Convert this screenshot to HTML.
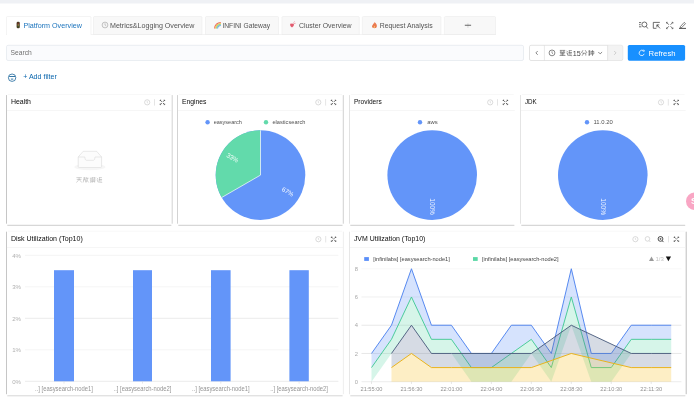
<!DOCTYPE html>
<html><head><meta charset="utf-8"><title>Dashboard</title>
<style>
html,body{margin:0;padding:0;background:#fff;overflow:hidden}
body{width:694px;height:400px;font-family:"Liberation Sans",sans-serif}
svg{display:block;position:absolute;left:0;top:0;will-change:transform;filter:blur(0.3px)}
svg text{font-family:"Liberation Sans",sans-serif}
</style></head><body>
<svg width="694" height="400" viewBox="0 0 694 400">
<rect x="0" y="0" width="694" height="400" fill="#fff"/>
<rect x="0" y="0" width="694" height="3.5" fill="#eff1f5"/>
<path d="M6.5,34.5 V17.5 Q6.5,16.5 7.5,16.5 H90 Q91,16.5 91,17.5 V34.5 Z" fill="#fff" stroke="#ececec" stroke-width="0.6"/>
<text x="23.4" y="27.7" font-size="7.1" fill="#1c74bd" text-anchor="start"  textLength="58.5" lengthAdjust="spacingAndGlyphs">Platform Overview</text>
<path d="M93.5,34.5 V17.5 Q93.5,16.5 94.5,16.5 H201 Q202,16.5 202,17.5 V34.5 Z" fill="#f8f8f8" stroke="#ececec" stroke-width="0.6"/>
<text x="110" y="27.7" font-size="7.1" fill="#545454" text-anchor="start"  textLength="84.4" lengthAdjust="spacingAndGlyphs">Metrics&amp;Logging Overview</text>
<path d="M205.5,34.5 V17.5 Q205.5,16.5 206.5,16.5 H277.5 Q278.5,16.5 278.5,17.5 V34.5 Z" fill="#f8f8f8" stroke="#ececec" stroke-width="0.6"/>
<text x="222.4" y="27.7" font-size="7.1" fill="#545454" text-anchor="start"  textLength="47.6" lengthAdjust="spacingAndGlyphs">INFINI Gateway</text>
<path d="M282,34.5 V17.5 Q282,16.5 283,16.5 H358.3 Q359.3,16.5 359.3,17.5 V34.5 Z" fill="#f8f8f8" stroke="#ececec" stroke-width="0.6"/>
<text x="298.9" y="27.7" font-size="7.1" fill="#545454" text-anchor="start"  textLength="52.7" lengthAdjust="spacingAndGlyphs">Cluster Overview</text>
<path d="M362.3,34.5 V17.5 Q362.3,16.5 363.3,16.5 H440 Q441,16.5 441,17.5 V34.5 Z" fill="#f8f8f8" stroke="#ececec" stroke-width="0.6"/>
<text x="379.7" y="27.7" font-size="7.1" fill="#545454" text-anchor="start"  textLength="52.9" lengthAdjust="spacingAndGlyphs">Request Analysis</text>
<path d="M444.4,34.5 V17.5 Q444.4,16.5 445.4,16.5 H494.5 Q495.5,16.5 495.5,17.5 V34.5 Z" fill="#f8f8f8" stroke="#ececec" stroke-width="0.6"/>
<rect x="6" y="34.2" width="490" height="0.6" fill="#ececec"/>
<rect x="6.8" y="33.8" width="83.9" height="1.2" fill="#fff"/>
<rect x="467.6" y="23.2" width="0.7" height="4.6" fill="#c8c8c8"/><rect x="464.8" y="24.8" width="6.3" height="0.8" fill="#444"/>
<rect x="16.6" y="21.8" width="3.2" height="6.4" rx="1.3" fill="#4a3b22"/><circle cx="18.2" cy="23.4" r="0.7" fill="#8a2b2b"/><circle cx="18.2" cy="25" r="0.7" fill="#b59a4a"/><circle cx="18.2" cy="26.6" r="0.7" fill="#2f6b33"/>
<circle cx="105" cy="25" r="2.9" fill="#f4f4f4" stroke="#aaa" stroke-width="0.7"/><path d="M105,23.3 V25 L106.2,25.8" stroke="#999" stroke-width="0.5" fill="none"/>
<g fill="none" stroke-width="1.05"><path d="M214.6,28.6 A6.2,6.2 0 0 1 220.8,22.4" stroke="#ea6a5c"/><path d="M215.6,28.6 A5.2,5.2 0 0 1 220.8,23.4" stroke="#f3c14a"/><path d="M216.6,28.6 A4.2,4.2 0 0 1 220.8,24.4" stroke="#8bd07c"/><path d="M217.6,28.6 A3.2,3.2 0 0 1 220.8,25.4" stroke="#69ade9"/></g>
<path d="M292,27.4 C289.5,25.8 289.8,23.4 291.2,23.4 C291.8,23.4 292,23.9 292,23.9 C292,23.9 292.3,23.4 292.9,23.4 C294.3,23.4 294.5,25.8 292,27.4 Z" fill="#e25a6e"/><path d="M293.5,22.6 l1.2,-1 M294.2,23.6 l1.3,-0.3" stroke="#e0455a" stroke-width="0.5"/>
<g transform="translate(1.1,0.3)"><path d="M373.3,21.8 C375.5,23.6 376.2,25 375.6,26.8 C375,28.4 371.6,28.4 371,26.8 C370.5,25.2 372.1,24.6 372.2,23.2 C372.8,23.6 373.3,23.2 373.3,21.8 Z" fill="#ea7a50"/><path d="M373.3,25.4 C374,26 374,27.3 373.3,27.7 C372.6,27.3 372.6,26 373.3,25.4Z" fill="#f8d070"/></g>
<g stroke="#3c3c3c" stroke-width="0.75" fill="none"><circle cx="644.4" cy="24.5" r="2.5"/><path d="M646.2,26.4 L647.8,28.5 M639,22.6 h2.2 M639,24.7 h1.6 M639,26.8 h2.4"/></g>
<g stroke="#3c3c3c" stroke-width="0.75" fill="none"><path d="M659.8,22.4 H653.3 V28.3 H656.4"/><path d="M656.9,24.9 L660,28.4 M656.9,27.3 V24.9 H659.2"/></g>
<g stroke="#3c3c3c" stroke-width="0.75" fill="none"><path d="M666.6,22.4 L668.8,24.7 M672.8,22.4 L670.6,24.7 M666.6,28.6 L668.8,26.3 M672.8,28.6 L670.6,26.3"/><path d="M666.5,23.5 V22.3 H667.7 M671.7,22.3 H672.9 V23.5 M672.9,27.5 V28.7 H671.7 M667.7,28.7 H666.5 V27.5" stroke-width="0.6"/></g>
<g stroke="#3c3c3c" stroke-width="0.75" fill="none"><path d="M679,28.4 H686" stroke-width="0.9"/><path d="M680.4,26.6 L684.2,22.4 L685.5,23.6 L681.7,27.6 L680.2,27.9 Z" stroke-width="0.65"/></g>
<rect x="6.5" y="45.3" width="517" height="15.2" rx="1.5" fill="#fafbfd" stroke="#e3e6ec" stroke-width="0.7"/>
<text x="10.6" y="55.4" font-size="6.9" fill="#707070" text-anchor="start"  textLength="21.2" lengthAdjust="spacingAndGlyphs">Search</text>
<rect x="529.5" y="45.3" width="93.2" height="15.2" rx="1.5" fill="#fff" stroke="#d9d9d9" stroke-width="0.7"/>
<path d="M607.6,45.6 H621 Q622.4,45.6 622.4,47 V58.8 Q622.4,60.2 621,60.2 H607.6 Z" fill="#f3f3f3"/>
<path d="M544.4,45.3 V60.5 M607.6,45.3 V60.5" stroke="#d9d9d9" stroke-width="0.6"/>
<path d="M537.7,51 L535.9,52.9 L537.7,54.8" stroke="#555" stroke-width="0.7" fill="none"/>
<path d="M614.2,51 L616,52.9 L614.2,54.8" stroke="#bdbdbd" stroke-width="0.7" fill="none"/>
<circle cx="552" cy="52.9" r="2.9" fill="none" stroke="#555" stroke-width="0.7"/><path d="M552,51.3 V53 L553,53.8" stroke="#555" stroke-width="0.6" fill="none"/>
<path transform="translate(559.3,49.6) scale(1.0,1.0)" d="M0.5,0.8 H5.9 M0.5,2.6 H5.9 M1.6,0.8 V5 M4.6,0.8 V5 M0.3,5.9 H6.1 M3.1,2.6 V5.9 M1.6,4.3 H4.6" stroke="#555" stroke-width="0.6" fill="none"/>
<path transform="translate(566,49.6) scale(1.0,1.0)" d="M0.6,1.2 L1.7,2.4 M0.4,3.4 H1.6 V5.6 L6.1,6.1 M2.8,1 H5.9 M3.3,1 V5 M2.6,3 H6 M4.9,3 V5.2" stroke="#555" stroke-width="0.6" fill="none"/>
<text x="572.8" y="55.5" font-size="7.2" fill="#444" text-anchor="start" >15</text>
<path transform="translate(581,49.6) scale(1.0,1.0)" d="M2,0.6 L0.4,3.4 M4.2,0.6 L6,3.4 M1.4,3.6 H4.8 V6 M2.8,3.6 L1,6.2" stroke="#555" stroke-width="0.6" fill="none"/>
<path transform="translate(587.8,49.6) scale(1.0,1.0)" d="M0.4,1.6 H2.8 M0.6,3.4 H2.8 M1.6,0.5 V6.2 M0.4,5.4 L2.8,4.8 M3.4,1.8 H6 V4.4 H3.4 Z M4.7,0.5 V6.3" stroke="#555" stroke-width="0.6" fill="none"/>
<path d="M598.3,52 L600.2,53.9 L602.1,52" stroke="#555" stroke-width="0.7" fill="none"/>
<rect x="627.8" y="45" width="57.3" height="15.7" rx="1.6" fill="#1890ff"/>
<path d="M643.4,51 A2.6,2.6 0 1 0 644.2,53.8" fill="none" stroke="#fff" stroke-width="0.8"/><path d="M642.6,50 L644.4,50.4 L643.7,52" fill="none" stroke="#fff" stroke-width="0.7"/>
<text x="648.6" y="55.7" font-size="7.7" fill="#fff" text-anchor="start" >Refresh</text>
<g stroke="#0f5e96" stroke-width="0.75" fill="none"><circle cx="12.1" cy="77.7" r="3.7"/><path d="M9.2,76.5 H15 M10.9,79.1 H13.3" stroke-width="0.85"/></g>
<text x="23.2" y="79.2" font-size="7.1" fill="#0a66ad" text-anchor="start"  textLength="33.6" lengthAdjust="spacingAndGlyphs">+ Add filter</text>
<rect x="6.5" y="94.6" width="165.7" height="130.70000000000002" rx="1.6" fill="#fff"/>
<path d="M7.9,94.6 H170.79999999999998" stroke="#f2f2f2" stroke-width="0.6"/>
<path d="M6.5,95.1 V223.70000000000002" stroke="#adadad" stroke-width="0.7"/>
<path d="M172.2,95.1 V223.70000000000002" stroke="#c0c0c0" stroke-width="0.7"/>
<path d="M7.3,225.3 H171.39999999999998" stroke="#b8b8b8" stroke-width="0.7"/>
<rect x="6.9" y="110.05" width="164.89999999999998" height="0.5" fill="#ececec"/>
<text x="10.9" y="104.25" font-size="7.0" fill="#0c0c0c" text-anchor="start"  textLength="20.1" lengthAdjust="spacingAndGlyphs">Health</text>
<g stroke="#2a2a2a" stroke-width="0.75" fill="none"><path d="M160.29999999999998,100.25 L161.79999999999998,101.75 M164.49999999999997,100.25 L162.99999999999997,101.75 M160.29999999999998,104.44999999999999 L161.79999999999998,102.94999999999999 M164.49999999999997,104.44999999999999 L162.99999999999997,102.94999999999999"/><path d="M160.09999999999997,101.05 V100.05 H161.09999999999997 M163.7,100.05 H164.7 V101.05 M164.7,103.64999999999999 V104.64999999999999 H163.7 M161.09999999999997,104.64999999999999 H160.09999999999997 V103.64999999999999" stroke-width="0.55"/></g>
<path d="M154.49999999999997,99.14999999999999 V105.55" stroke="#d4d4d4" stroke-width="0.6"/>
<circle cx="147.2" cy="102.35" r="2.6" fill="none" stroke="#c2c2c2" stroke-width="0.6"/><path d="M147.2,101.05 V102.55 L148.1,103.14999999999999" stroke="#c2c2c2" stroke-width="0.5" fill="none"/>
<rect x="177.5" y="94.6" width="165.8" height="130.70000000000002" rx="1.6" fill="#fff"/>
<path d="M178.9,94.6 H341.90000000000003" stroke="#f2f2f2" stroke-width="0.6"/>
<path d="M177.5,95.1 V223.70000000000002" stroke="#c0c0c0" stroke-width="0.7"/>
<path d="M343.3,95.1 V223.70000000000002" stroke="#bdbdbd" stroke-width="0.7"/>
<path d="M178.3,225.3 H342.5" stroke="#b8b8b8" stroke-width="0.7"/>
<rect x="177.9" y="110.05" width="165.0" height="0.5" fill="#ececec"/>
<text x="181.9" y="104.25" font-size="7.0" fill="#0c0c0c" text-anchor="start"  textLength="24.5" lengthAdjust="spacingAndGlyphs">Engines</text>
<g stroke="#2a2a2a" stroke-width="0.75" fill="none"><path d="M331.4,100.25 L332.9,101.75 M335.6,100.25 L334.1,101.75 M331.4,104.44999999999999 L332.9,102.94999999999999 M335.6,104.44999999999999 L334.1,102.94999999999999"/><path d="M331.2,101.05 V100.05 H332.2 M334.8,100.05 H335.8 V101.05 M335.8,103.64999999999999 V104.64999999999999 H334.8 M332.2,104.64999999999999 H331.2 V103.64999999999999" stroke-width="0.55"/></g>
<path d="M325.6,99.14999999999999 V105.55" stroke="#d4d4d4" stroke-width="0.6"/>
<circle cx="318.3" cy="102.35" r="2.6" fill="none" stroke="#c2c2c2" stroke-width="0.6"/><path d="M318.3,101.05 V102.55 L319.2,103.14999999999999" stroke="#c2c2c2" stroke-width="0.5" fill="none"/>
<rect x="349.5" y="94.6" width="165.70000000000005" height="130.70000000000002" rx="1.6" fill="#fff"/>
<path d="M350.9,94.6 H513.8000000000001" stroke="#f2f2f2" stroke-width="0.6"/>
<path d="M349.5,95.1 V223.70000000000002" stroke="#d5d5d5" stroke-width="0.7"/>
<path d="M350.3,225.3 H514.4000000000001" stroke="#b8b8b8" stroke-width="0.7"/>
<rect x="349.9" y="110.05" width="164.90000000000003" height="0.5" fill="#ececec"/>
<text x="353.9" y="104.25" font-size="7.0" fill="#0c0c0c" text-anchor="start"  textLength="27.8" lengthAdjust="spacingAndGlyphs">Providers</text>
<g stroke="#2a2a2a" stroke-width="0.75" fill="none"><path d="M503.3,100.25 L504.8,101.75 M507.50000000000006,100.25 L506.00000000000006,101.75 M503.3,104.44999999999999 L504.8,102.94999999999999 M507.50000000000006,104.44999999999999 L506.00000000000006,102.94999999999999"/><path d="M503.1,101.05 V100.05 H504.1 M506.70000000000005,100.05 H507.70000000000005 V101.05 M507.70000000000005,103.64999999999999 V104.64999999999999 H506.70000000000005 M504.1,104.64999999999999 H503.1 V103.64999999999999" stroke-width="0.55"/></g>
<path d="M497.50000000000006,99.14999999999999 V105.55" stroke="#d4d4d4" stroke-width="0.6"/>
<circle cx="490.20000000000005" cy="102.35" r="2.6" fill="none" stroke="#c2c2c2" stroke-width="0.6"/><path d="M490.20000000000005,101.05 V102.55 L491.1,103.14999999999999" stroke="#c2c2c2" stroke-width="0.5" fill="none"/>
<rect x="520.5" y="94.6" width="165.5" height="130.70000000000002" rx="1.6" fill="#fff"/>
<path d="M521.9,94.6 H684.6" stroke="#f2f2f2" stroke-width="0.6"/>
<path d="M520.5,95.1 V223.70000000000002" stroke="#d8d8d8" stroke-width="0.7"/>
<path d="M521.3,225.3 H685.2" stroke="#b8b8b8" stroke-width="0.7"/>
<rect x="520.9" y="110.05" width="164.7" height="0.5" fill="#ececec"/>
<text x="524.9" y="104.25" font-size="7.0" fill="#0c0c0c" text-anchor="start"  textLength="11.8" lengthAdjust="spacingAndGlyphs">JDK</text>
<g stroke="#2a2a2a" stroke-width="0.75" fill="none"><path d="M674.1,100.25 L675.6,101.75 M678.3000000000001,100.25 L676.8000000000001,101.75 M674.1,104.44999999999999 L675.6,102.94999999999999 M678.3000000000001,104.44999999999999 L676.8000000000001,102.94999999999999"/><path d="M673.9000000000001,101.05 V100.05 H674.9000000000001 M677.5,100.05 H678.5 V101.05 M678.5,103.64999999999999 V104.64999999999999 H677.5 M674.9000000000001,104.64999999999999 H673.9000000000001 V103.64999999999999" stroke-width="0.55"/></g>
<path d="M668.3000000000001,99.14999999999999 V105.55" stroke="#d4d4d4" stroke-width="0.6"/>
<circle cx="661.0" cy="102.35" r="2.6" fill="none" stroke="#c2c2c2" stroke-width="0.6"/><path d="M661.0,101.05 V102.55 L661.9,103.14999999999999" stroke="#c2c2c2" stroke-width="0.5" fill="none"/>
<rect x="6.5" y="231.2" width="336.9" height="164.60000000000002" rx="1.6" fill="#fff"/>
<path d="M7.9,231.2 H342.0" stroke="#f4f4f4" stroke-width="0.6"/>
<path d="M6.5,231.7 V394.2" stroke="#adadad" stroke-width="0.7"/>
<path d="M343.4,231.7 V394.2" stroke="#e8e8e8" stroke-width="0.7"/>
<path d="M7.3,395.8 H342.59999999999997" stroke="#c4c4c4" stroke-width="0.7"/>
<rect x="6.9" y="247.15" width="336.09999999999997" height="0.5" fill="#ececec"/>
<text x="10.9" y="241.10000000000002" font-size="7.0" fill="#0c0c0c" text-anchor="start"  textLength="71.9" lengthAdjust="spacingAndGlyphs">Disk Utilization (Top10)</text>
<g stroke="#2a2a2a" stroke-width="0.75" fill="none"><path d="M331.49999999999994,237.10000000000002 L332.99999999999994,238.60000000000002 M335.7,237.10000000000002 L334.2,238.60000000000002 M331.49999999999994,241.3 L332.99999999999994,239.8 M335.7,241.3 L334.2,239.8"/><path d="M331.29999999999995,237.9 V236.9 H332.29999999999995 M334.9,236.9 H335.9 V237.9 M335.9,240.50000000000003 V241.50000000000003 H334.9 M332.29999999999995,241.50000000000003 H331.29999999999995 V240.50000000000003" stroke-width="0.55"/></g>
<path d="M325.7,236.00000000000003 V242.4" stroke="#d4d4d4" stroke-width="0.6"/>
<circle cx="318.4" cy="239.20000000000002" r="2.6" fill="none" stroke="#c2c2c2" stroke-width="0.6"/><path d="M318.4,237.9 V239.4 L319.29999999999995,240.00000000000003" stroke="#c2c2c2" stroke-width="0.5" fill="none"/>
<rect x="349.5" y="231.2" width="336.70000000000005" height="164.60000000000002" rx="1.6" fill="#fff"/>
<path d="M350.9,231.2 H684.8000000000001" stroke="#f4f4f4" stroke-width="0.6"/>
<path d="M349.5,231.7 V394.2" stroke="#dcdcdc" stroke-width="0.7"/>
<path d="M686.2,231.7 V394.2" stroke="#a2a2a2" stroke-width="0.7"/>
<path d="M350.3,395.8 H685.4000000000001" stroke="#c4c4c4" stroke-width="0.7"/>
<rect x="349.9" y="247.15" width="335.90000000000003" height="0.5" fill="#ececec"/>
<text x="353.9" y="241.10000000000002" font-size="7.0" fill="#0c0c0c" text-anchor="start"  textLength="71.5" lengthAdjust="spacingAndGlyphs">JVM Utilization (Top10)</text>
<g stroke="#2a2a2a" stroke-width="0.75" fill="none"><path d="M674.3000000000001,237.10000000000002 L675.8000000000001,238.60000000000002 M678.5000000000001,237.10000000000002 L677.0000000000001,238.60000000000002 M674.3000000000001,241.3 L675.8000000000001,239.8 M678.5000000000001,241.3 L677.0000000000001,239.8"/><path d="M674.1000000000001,237.9 V236.9 H675.1000000000001 M677.7,236.9 H678.7 V237.9 M678.7,240.50000000000003 V241.50000000000003 H677.7 M675.1000000000001,241.50000000000003 H674.1000000000001 V240.50000000000003" stroke-width="0.55"/></g>
<path d="M668.5000000000001,236.00000000000003 V242.4" stroke="#d4d4d4" stroke-width="0.6"/>
<circle cx="635.4000000000001" cy="239.20000000000002" r="2.6" fill="none" stroke="#c2c2c2" stroke-width="0.6"/><path d="M635.4000000000001,237.9 V239.4 L636.3000000000001,240.00000000000003" stroke="#c2c2c2" stroke-width="0.5" fill="none"/>
<g stroke="#c2c2c2" stroke-width="0.6" fill="none"><circle cx="647.5000000000001" cy="238.9" r="2.3"/><path d="M649.2,240.70000000000002 L650.4000000000001,242.00000000000003"/></g>
<g stroke="#222" stroke-width="0.8" fill="none"><circle cx="660.5000000000001" cy="238.9" r="2.4"/><path d="M662.3000000000001,240.8 L663.5000000000001,242.10000000000002"/><path d="M659.4000000000001,238.9 H661.6000000000001 M660.5000000000001,237.8 V240.00000000000003" stroke-width="0.5"/></g>
<ellipse cx="89.9" cy="167" rx="15.6" ry="3.2" fill="#f6f6f6"/>
<path d="M78.2,157 L83.2,151.3 H96.6 L101.6,157 V166.4 Q101.6,167.5 100.5,167.5 H79.3 Q78.2,167.5 78.2,166.4 Z" fill="#fcfcfc" stroke="#dadada" stroke-width="0.6"/>
<path d="M78.2,157 H84.8 Q84.8,160.3 86.4,160.3 H93.4 Q95,160.3 95,157 H101.6" fill="none" stroke="#dadada" stroke-width="0.6"/>
<path transform="translate(76.0,176.7) scale(0.96875,0.9393939393939394)" d="M0.4,1 H6 M0.8,2.9 H5.6 M3.2,1 V2.9 M3.2,2.9 L0.5,6.2 M3.2,2.9 L6,6.2" stroke="#ababab" stroke-width="0.55" fill="none"/>
<path transform="translate(82.75,176.7) scale(0.96875,0.9393939393939394)" d="M0.5,1.4 H3 M1.7,0.5 V3.2 M0.4,3.2 H3.1 M0.9,3.2 L0.6,6 M2.6,3.2 L3,6 M3.8,0.6 L3.5,3 M3.7,1.6 H6 M5.1,1.6 L3.6,6.1 M4.2,3.6 L6,6.1" stroke="#ababab" stroke-width="0.55" fill="none"/>
<path transform="translate(89.5,176.7) scale(0.96875,0.9393939393939394)" d="M0.4,1.6 H1.6 V6.1 M0.4,3.6 H1.6 M0.5,5.9 L2.2,5.2 M2.4,1.2 H6 M2.4,2.8 H6 M2.8,0.5 V2.8 M5.4,0.5 V2.8 M2.3,4.2 H6.1 M3.1,4.2 V6.2 M5.3,4.2 V6.2 M3.1,5.2 H5.3" stroke="#ababab" stroke-width="0.55" fill="none"/>
<path transform="translate(96.25,176.7) scale(0.96875,0.9393939393939394)" d="M0.6,1.2 L1.7,2.4 M0.4,3.4 H1.6 V5.6 L6.1,6.1 M2.8,1 H5.9 M3.3,1 V5 M2.6,3 H6 M4.9,3 V5.2" stroke="#ababab" stroke-width="0.55" fill="none"/>
<circle cx="260.5" cy="175.1" r="44.8" fill="#6395f9"/>
<path d="M260.5,175.1 L221.70,197.50 A44.8,44.8 0 0 1 260.5,130.3 Z" fill="#62daab"/>
<path d="M260.5,130.3 L260.5,175.1 L221.70,197.50" stroke="#fff" stroke-width="0.7" fill="none"/>
<text x="232.6" y="160" font-size="6.3" fill="#fff" fill-opacity="0.92" text-anchor="middle" transform="rotate(30 232.6 157.6)">33%</text>
<text x="287.8" y="193.9" font-size="6.3" fill="#fff" fill-opacity="0.92" text-anchor="middle" transform="rotate(30 287.8 191.5)">67%</text>
<circle cx="207.6" cy="122.2" r="2.2" fill="#6395f9"/>
<text x="213.7" y="124.2" font-size="5.9" fill="#505050" text-anchor="start"  textLength="28.2" lengthAdjust="spacingAndGlyphs">easysearch</text>
<circle cx="266" cy="122.2" r="2.2" fill="#62daab"/>
<text x="272.4" y="124.2" font-size="5.9" fill="#505050" text-anchor="start"  textLength="33" lengthAdjust="spacingAndGlyphs">elasticsearch</text>
<circle cx="432.2" cy="175.1" r="44.8" fill="#6395f9"/>
<circle cx="420" cy="122.2" r="2.2" fill="#6395f9"/>
<text x="427.2" y="124.2" font-size="5.9" fill="#505050" text-anchor="start" >aws</text>
<text x="432.4" y="206.6" font-size="6.5" fill="#fff" fill-opacity="0.9" text-anchor="middle" transform="rotate(90 432.4 206.6) translate(0 2.3)">100%</text>
<circle cx="602.8" cy="175.1" r="44.8" fill="#6395f9"/>
<circle cx="587" cy="122.2" r="2.2" fill="#6395f9"/>
<text x="593.5" y="124.2" font-size="5.9" fill="#505050" text-anchor="start" >11.0.20</text>
<text x="603" y="206.6" font-size="6.5" fill="#fff" fill-opacity="0.9" text-anchor="middle" transform="rotate(90 603 206.6) translate(0 2.3)">100%</text>
<circle cx="694.8" cy="201.2" r="8.8" fill="#f9a6c4"/><text x="691" y="204.2" font-size="9" font-weight="bold" fill="#fff">S</text>
<path d="M25,255.3 H338.4" stroke="#ececec" stroke-width="0.6"/>
<text x="21" y="257.5" font-size="6.1" fill="#b0b0b0" text-anchor="end" >4%</text>
<path d="M25,286.8 H338.4" stroke="#ececec" stroke-width="0.6"/>
<text x="21" y="289.0" font-size="6.1" fill="#b0b0b0" text-anchor="end" >3%</text>
<path d="M25,318.3 H338.4" stroke="#dedede" stroke-width="0.6"/>
<text x="21" y="320.5" font-size="6.1" fill="#b0b0b0" text-anchor="end" >2%</text>
<path d="M25,349.8 H338.4" stroke="#ececec" stroke-width="0.6"/>
<text x="21" y="352.0" font-size="6.1" fill="#b0b0b0" text-anchor="end" >1%</text>
<path d="M25,381.3 H338.4" stroke="#dedede" stroke-width="0.6"/>
<text x="21" y="383.5" font-size="6.1" fill="#b0b0b0" text-anchor="end" >0%</text>
<rect x="54" y="270.2" width="20" height="111.10000000000002" fill="#6395f9"/>
<path d="M64.0,381.3 V383.6" stroke="#d0d0d0" stroke-width="0.5"/>
<text x="35.1" y="390.6" font-size="6.3" fill="#959595" text-anchor="start"  textLength="57.8" lengthAdjust="spacingAndGlyphs">..] [easysearch-node1]</text>
<rect x="133" y="270.2" width="19" height="111.10000000000002" fill="#6395f9"/>
<path d="M142.5,381.3 V383.6" stroke="#d0d0d0" stroke-width="0.5"/>
<text x="113.6" y="390.6" font-size="6.3" fill="#959595" text-anchor="start"  textLength="57.8" lengthAdjust="spacingAndGlyphs">..] [easysearch-node2]</text>
<rect x="211" y="270.2" width="19.599999999999994" height="111.10000000000002" fill="#6395f9"/>
<path d="M220.8,381.3 V383.6" stroke="#d0d0d0" stroke-width="0.5"/>
<text x="191.9" y="390.6" font-size="6.3" fill="#959595" text-anchor="start"  textLength="57.8" lengthAdjust="spacingAndGlyphs">..] [easysearch-node1]</text>
<rect x="289.4" y="270.2" width="19.400000000000034" height="111.10000000000002" fill="#6395f9"/>
<path d="M299.1,381.3 V383.6" stroke="#d0d0d0" stroke-width="0.5"/>
<text x="270.20000000000005" y="390.6" font-size="6.3" fill="#959595" text-anchor="start"  textLength="57.8" lengthAdjust="spacingAndGlyphs">..] [easysearch-node2]</text>
<path d="M361.5,381.7 H681.4" stroke="#e0e0e0" stroke-width="0.6"/>
<text x="357.9" y="383.8" font-size="5.8" fill="#a8a8a8" text-anchor="end" >0</text>
<path d="M361.5,353.46 H681.4" stroke="#d6d6d6" stroke-width="0.6"/>
<text x="357.9" y="355.56" font-size="5.8" fill="#a8a8a8" text-anchor="end" >2</text>
<path d="M361.5,325.22 H681.4" stroke="#d6d6d6" stroke-width="0.6"/>
<text x="357.9" y="327.32000000000005" font-size="5.8" fill="#a8a8a8" text-anchor="end" >4</text>
<path d="M361.5,296.98 H681.4" stroke="#e6e6e6" stroke-width="0.6"/>
<text x="357.9" y="299.08000000000004" font-size="5.8" fill="#a8a8a8" text-anchor="end" >6</text>
<path d="M361.5,268.74 H681.4" stroke="#f3f3f3" stroke-width="0.6"/>
<text x="357.9" y="270.84000000000003" font-size="5.8" fill="#a8a8a8" text-anchor="end" >8</text>
<polygon points="371.5,353.46 391.48,325.22 411.46,268.74 431.44,325.22 451.42,325.22 471.4,353.46 491.38,353.46 511.36,325.22 531.34,325.22 551.32,353.46 571.3,268.74 591.28,353.46 611.26,353.46 631.24,325.22 651.22,325.22 671.2,325.22 671.2,339.34 651.22,339.34 631.24,339.34 611.26,367.58 591.28,367.58 571.3,296.98 551.32,367.58 531.34,339.34 511.36,353.46 491.38,367.58 471.4,367.58 451.42,339.34 431.44,339.34 411.46,296.98 391.48,339.34 371.5,367.58" fill="#5B8FF9" fill-opacity="0.25"/><polyline points="371.5,353.46 391.48,325.22 411.46,268.74 431.44,325.22 451.42,325.22 471.4,353.46 491.38,353.46 511.36,325.22 531.34,325.22 551.32,353.46 571.3,268.74 591.28,353.46 611.26,353.46 631.24,325.22 651.22,325.22 671.2,325.22" fill="none" stroke="#4f84ef" stroke-width="0.95" stroke-linejoin="round"/><polygon points="371.5,367.58 391.48,339.34 411.46,296.98 431.44,339.34 451.42,339.34 471.4,367.58 491.38,367.58 511.36,353.46 531.34,339.34 551.32,367.58 571.3,296.98 591.28,367.58 611.26,367.58 631.24,339.34 651.22,339.34 671.2,339.34 671.2,353.46 651.22,353.46 631.24,353.46 611.26,381.7 591.28,381.7 571.3,325.22 551.32,381.7 531.34,353.46 511.36,381.7 491.38,381.7 471.4,381.7 451.42,353.46 431.44,353.46 411.46,325.22 391.48,353.46 371.5,381.7" fill="#5AD8A6" fill-opacity="0.25"/><polyline points="371.5,367.58 391.48,339.34 411.46,296.98 431.44,339.34 451.42,339.34 471.4,367.58 491.38,367.58 511.36,353.46 531.34,339.34 551.32,367.58 571.3,296.98 591.28,367.58 611.26,367.58 631.24,339.34 651.22,339.34 671.2,339.34" fill="none" stroke="#45c997" stroke-width="0.95" stroke-linejoin="round"/><polygon points="391.48,353.46 411.46,325.22 431.44,353.46 451.42,353.46 531.34,353.46 571.3,325.22 631.24,353.46 651.22,353.46 671.2,353.46 671.2,367.58 651.22,367.58 631.24,367.58 571.3,353.46 531.34,367.58 451.42,367.58 431.44,367.58 411.46,353.46 391.48,367.58" fill="#5D7092" fill-opacity="0.25"/><polyline points="391.48,353.46 411.46,325.22 431.44,353.46 451.42,353.46 531.34,353.46 571.3,325.22 631.24,353.46 651.22,353.46 671.2,353.46" fill="none" stroke="#4d5f80" stroke-width="0.95" stroke-linejoin="round"/><polygon points="391.48,367.58 411.46,353.46 431.44,367.58 451.42,367.58 531.34,367.58 571.3,353.46 631.24,367.58 651.22,367.58 671.2,367.58 671.2,381.7 651.22,381.7 631.24,381.7 571.3,381.7 531.34,381.7 451.42,381.7 431.44,381.7 411.46,381.7 391.48,381.7" fill="#F6BD16" fill-opacity="0.25"/><polyline points="391.48,367.58 411.46,353.46 431.44,367.58 451.42,367.58 531.34,367.58 571.3,353.46 631.24,367.58 651.22,367.58 671.2,367.58" fill="none" stroke="#e9b114" stroke-width="0.95" stroke-linejoin="round"/>
<path d="M371.5,381.7 V384" stroke="#cfcfcf" stroke-width="0.5"/>
<text x="360.5" y="390.6" font-size="5.8" fill="#929292" text-anchor="start"  textLength="22" lengthAdjust="spacingAndGlyphs">21:55:00</text>
<path d="M411.46,381.7 V384" stroke="#cfcfcf" stroke-width="0.5"/>
<text x="400.46" y="390.6" font-size="5.8" fill="#929292" text-anchor="start"  textLength="22" lengthAdjust="spacingAndGlyphs">21:56:30</text>
<path d="M451.42,381.7 V384" stroke="#cfcfcf" stroke-width="0.5"/>
<text x="440.42" y="390.6" font-size="5.8" fill="#929292" text-anchor="start"  textLength="22" lengthAdjust="spacingAndGlyphs">22:01:00</text>
<path d="M491.38,381.7 V384" stroke="#cfcfcf" stroke-width="0.5"/>
<text x="480.38" y="390.6" font-size="5.8" fill="#929292" text-anchor="start"  textLength="22" lengthAdjust="spacingAndGlyphs">22:04:00</text>
<path d="M531.34,381.7 V384" stroke="#cfcfcf" stroke-width="0.5"/>
<text x="520.34" y="390.6" font-size="5.8" fill="#929292" text-anchor="start"  textLength="22" lengthAdjust="spacingAndGlyphs">22:06:30</text>
<path d="M571.3,381.7 V384" stroke="#cfcfcf" stroke-width="0.5"/>
<text x="560.3" y="390.6" font-size="5.8" fill="#929292" text-anchor="start"  textLength="22" lengthAdjust="spacingAndGlyphs">22:08:30</text>
<path d="M611.26,381.7 V384" stroke="#cfcfcf" stroke-width="0.5"/>
<text x="600.26" y="390.6" font-size="5.8" fill="#929292" text-anchor="start"  textLength="22" lengthAdjust="spacingAndGlyphs">22:10:30</text>
<path d="M651.22,381.7 V384" stroke="#cfcfcf" stroke-width="0.5"/>
<text x="640.22" y="390.6" font-size="5.8" fill="#929292" text-anchor="start"  textLength="22" lengthAdjust="spacingAndGlyphs">22:11:30</text>
<rect x="364.2" y="257.1" width="4.7" height="3.8" fill="#5B8FF9"/>
<text x="373.2" y="261.3" font-size="6.1" fill="#444" text-anchor="start"  textLength="76.6" lengthAdjust="spacingAndGlyphs">[infinilabs] [easysearch-node1]</text>
<rect x="473" y="257.1" width="4.7" height="3.8" fill="#5AD8A6"/>
<text x="482" y="261.3" font-size="6.1" fill="#444" text-anchor="start"  textLength="76.6" lengthAdjust="spacingAndGlyphs">[infinilabs] [easysearch-node2]</text>
<path d="M649,261 L651.5,256.6 L654,261 Z" fill="#9a9a9a"/>
<text x="655.4" y="261.2" font-size="6.0" fill="#c2c2c2" text-anchor="start" >1/3</text>
<path d="M665.8,256.6 L671,256.6 L668.4,261.2 Z" fill="#111"/>
</svg>
</body></html>
